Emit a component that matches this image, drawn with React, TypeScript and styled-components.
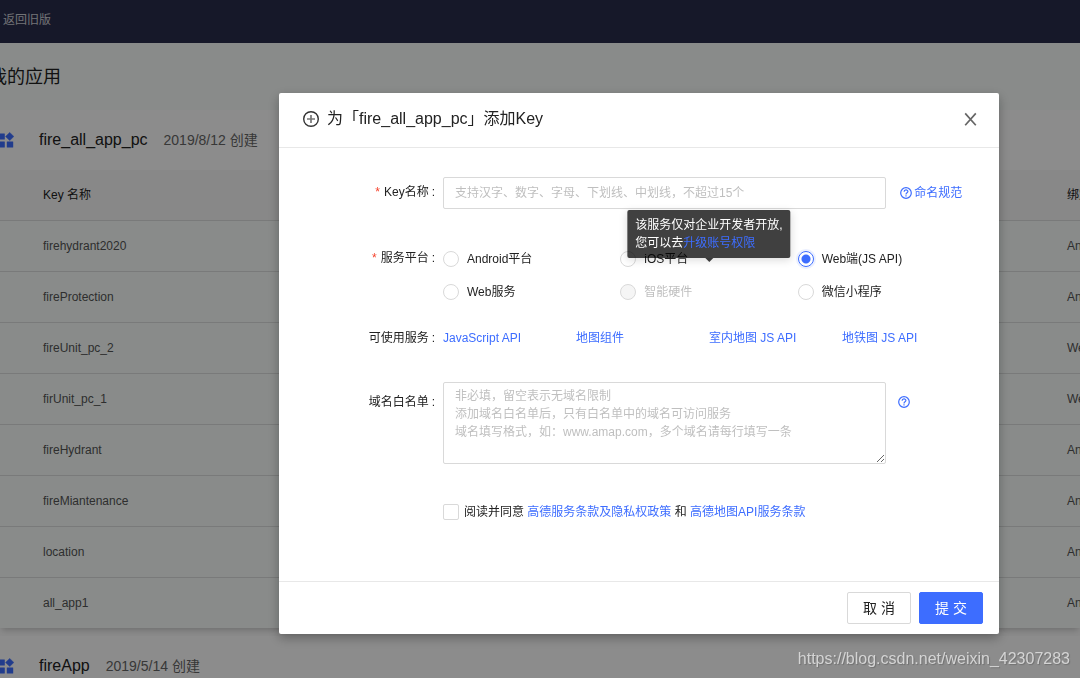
import React from 'react';
import styled, { createGlobalStyle } from 'styled-components';

const GlobalStyle = createGlobalStyle`
  *, *::before, *::after { box-sizing: border-box; }
  body {
    margin: 0;
    overflow: hidden;
    background: #fbfbfb;
    color: #222;
    font: 12px/18px "Liberation Sans", "Noto Sans CJK SC", sans-serif;
  }
  button, input, textarea { font: inherit; }
`;

const Page = styled.div`
  height: 100vh;
  overflow: hidden;
`;

const TopBar = styled.header`
  display: flex;
  align-items: center;
  height: 43px;
  padding: 0 3px 4px;
  background: #282c4b;
`;

const BackLink = styled.a`
  color: #d0d1d8;
  text-decoration: none;
`;

const PageHead = styled.div`
  display: flex;
  align-items: center;
  height: 67px;
  margin-left: -11px;
  background: #f9fefc;
`;

const PageTitle = styled.h1`
  margin: 0;
  font-size: 18px;
  line-height: 28px;
  font-weight: 400;
`;

const AppCard = styled.section`
  margin-bottom: 8px;
  background: #fff;
  box-shadow: 0 4px 6px -2px rgba(0, 0, 0, 0.2);
`;

const AppHead = styled.div`
  display: flex;
  align-items: center;
  height: 60px;
  margin-left: -2px;
`;

const AppIcon = styled.svg`
  flex: none;
  width: 16px;
  height: 16px;
  margin-right: 25px;
  fill: #3d6dff;
`;

const AppName = styled.h2`
  margin: 0 16px 0 0;
  font-size: 16px;
  line-height: 24px;
  font-weight: 400;
`;

const AppDate = styled.span`
  font-size: 14px;
  line-height: 22px;
  color: #666;
`;

const KeyTable = styled.table`
  width: 100%;
  table-layout: fixed;
  border-collapse: separate;
  border-spacing: 0;
  text-align: left;
  white-space: nowrap;

  th {
    height: 51px;
    padding: 0;
    font-weight: 400;
    background: #f7f7f7;
    border-bottom: 1px solid #dcdfde;
  }
  td {
    height: 51px;
    padding: 0;
    color: #555;
    background: #f9fefc;
    border-bottom: 1px solid #dcdfde;
  }
  tr:last-child td {
    height: 50px;
    border-bottom: 0;
  }
  thead tr:last-child th { height: 51px; }
  th:first-child, td:first-child { padding-left: 43px; }
  th:last-child, td:last-child { width: 13px; }
`;

const Overlay = styled.div`
  position: fixed;
  inset: 0;
  display: flex;
  justify-content: flex-end;
  align-items: flex-start;
  padding: 93px 81px 0 0;
  background: rgba(0, 0, 0, 0.45);
`;

const Dialog = styled.div`
  width: 720px;
  background: #fff;
  border-radius: 2px;
  box-shadow: 0 4px 12px rgba(0, 0, 0, 0.3);
`;

const DialogHead = styled.div`
  display: flex;
  align-items: center;
  height: 55px;
  padding: 0 20px 2px 24px;
  border-bottom: 1px solid #e8e8e8;
`;

const DialogTitle = styled.h3`
  flex: 1;
  margin: 0 0 0 8px;
  font-size: 16px;
  line-height: 24px;
  font-weight: 400;
`;

const CloseButton = styled.button`
  display: flex;
  padding: 2px;
  border: 0;
  background: none;
  color: #666;
`;

const Form = styled.form`
  margin: 0;
`;

const Fields = styled.div`
  padding: 29px 24px 53px 0;
`;

const Row = styled.div<{ $gap: number }>`
  display: grid;
  grid-template-columns: 164px 1fr;
  margin-bottom: ${(p) => p.$gap}px;
`;

const RowLabel = styled.label<{ $height: number; $required?: boolean }>`
  padding-right: 8px;
  line-height: ${(p) => p.$height}px;
  text-align: right;

  &::before {
    content: "${(p) => (p.$required ? '*' : '')}";
    margin-right: 4px;
    color: #f5432d;
  }
  &::after {
    content: ":";
    margin-left: 3px;
  }
`;

const FieldWithHelp = styled.div`
  display: grid;
  grid-template-columns: 5fr 1fr;
`;

const TextInput = styled.input`
  width: 100%;
  height: 32px;
  padding: 0 11px;
  border: 1px solid #d9d9d9;
  border-radius: 2px;
  outline: 0;
  &::placeholder { color: #bfbfbf; }
`;

const TextArea = styled.textarea`
  display: block;
  width: 100%;
  height: 82px;
  padding: 4px 11px;
  border: 1px solid #d9d9d9;
  border-radius: 2px;
  outline: 0;
  resize: vertical;
  &::placeholder { color: #bfbfbf; }
`;

const Link = styled.a`
  color: #3d6dff;
  text-decoration: none;
`;

const HelpLink = styled(Link)`
  display: flex;
  align-items: center;
  gap: 2px;
  height: 32px;
  margin-left: 14px;
  white-space: nowrap;
`;

const AreaHelp = styled(HelpLink)`
  height: 40px;
  margin-left: 12px;
`;

const RadioGrid = styled.div`
  display: grid;
  grid-template-columns: repeat(3, 1fr);
  row-gap: 1px;
`;

const OptionCell = styled.div`
  position: relative;
  display: flex;
  align-items: center;
  height: 32px;
`;

const OptionLabel = styled.label<{ $disabled?: boolean }>`
  display: flex;
  align-items: center;
  gap: 8px;
  color: ${(p) => (p.$disabled ? '#bfbfbf' : 'inherit')};
`;

const Radio = styled.input`
  appearance: none;
  width: 16px;
  height: 16px;
  margin: 0;
  border: 1px solid #d9d9d9;
  border-radius: 50%;
  background: #fff;

  &:checked {
    border-color: #3d6dff;
    background: radial-gradient(circle, #3d6dff 0 4px, #fff 5px);
    box-shadow: 0 0 0 2px rgba(61, 109, 255, 0.1);
  }
  &:disabled { background: #f5f5f5; }
`;

const Tooltip = styled.div`
  position: absolute;
  z-index: 1;
  left: 50%;
  bottom: calc(100% + 18px);
  transform: translateX(-50%);
  padding: 6px 8px;
  border-radius: 2px;
  background: rgba(0, 0, 0, 0.75);
  box-shadow: 0 2px 8px rgba(0, 0, 0, 0.15);
  color: #fff;
  white-space: nowrap;

  &::after {
    content: "";
    position: absolute;
    top: 100%;
    left: 50%;
    margin-left: -4px;
    border: 4px solid transparent;
    border-top-color: rgba(0, 0, 0, 0.75);
    border-bottom: 0;
  }
`;

const ServiceLinks = styled.div`
  display: grid;
  grid-template-columns: repeat(4, 1fr);
  line-height: 34px;
  white-space: nowrap;
`;

const Agreement = styled.div`
  display: flex;
  align-items: center;
  height: 32px;
  margin-left: 164px;
`;

const Checkbox = styled.input`
  appearance: none;
  width: 16px;
  height: 16px;
  margin: 0 5px 0 0;
  border: 1px solid #d9d9d9;
  border-radius: 2px;
  background: #fff;
  &:checked { background: #3d6dff; }
`;

const DialogFoot = styled.div`
  display: flex;
  justify-content: flex-end;
  gap: 8px;
  padding: 10px 16px;
  border-top: 1px solid #e8e8e8;
`;

const Button = styled.button<{ $primary?: boolean }>`
  width: 64px;
  height: 32px;
  padding: 0;
  border: 1px solid ${(p) => (p.$primary ? '#3d6dff' : '#d9d9d9')};
  border-radius: 2px;
  background: ${(p) => (p.$primary ? '#3d6dff' : '#fff')};
  color: ${(p) => (p.$primary ? '#fff' : '#222')};
  font-size: 14px;
  line-height: 22px;
`;

const Watermark = styled.div`
  position: fixed;
  right: 10px;
  bottom: 7px;
  color: #d4d4d4;
  font-size: 16px;
  line-height: 24px;
  text-shadow: 1px 1px 1px rgba(0, 0, 0, 0.2);
`;

const BlocksIcon = () => (
  <AppIcon viewBox="0 0 16 16" aria-hidden="true">
    <rect x="0" y="1.4" width="6.8" height="6.2" rx="0.4" />
    <rect x="0" y="9.4" width="6.8" height="6.2" rx="0.4" />
    <rect x="8.8" y="9.4" width="6.4" height="6.2" rx="0.4" />
    <path d="M11.7 0.4 L15.8 4.5 L11.7 8.6 L7.6 4.5Z" stroke="#3d6dff" strokeWidth="0.5" strokeLinejoin="round" />
  </AppIcon>
);

const QuestionIcon = () => (
  <svg width="12" height="12" viewBox="0 0 12 12" fill="none" stroke="currentColor" strokeWidth="1.2" aria-hidden="true">
    <circle cx="6" cy="6" r="5.3" />
    <path d="M4.1 4.8 C4.1 2.3 7.9 2.4 7.9 4.6 C7.9 5.8 6 5.8 6 7.4 M6 8.2 V9.4" />
  </svg>
);

const PlusCircleIcon = () => (
  <svg width="16" height="16" viewBox="0 0 16 16" fill="none" aria-hidden="true">
    <circle cx="8" cy="8" r="7.3" stroke="#333" strokeWidth="1.4" />
    <path d="M8 4 V12 M4 8 H12" stroke="#777" strokeWidth="1.7" />
  </svg>
);

const CloseIcon = () => (
  <svg width="13" height="14" viewBox="0 0 13 14" fill="none" stroke="currentColor" strokeWidth="1.7" aria-hidden="true">
    <path d="M1.2 1.4 L11.8 13.2 M11.8 1.4 L1.2 13.2" />
  </svg>
);

const keys: [string, string][] = [
  ['firehydrant2020', 'Android平台'],
  ['fireProtection', 'Android平台'],
  ['fireUnit_pc_2', 'Web端'],
  ['firUnit_pc_1', 'Web端'],
  ['fireHydrant', 'Android平台'],
  ['fireMiantenance', 'Android平台'],
  ['location', 'Android平台'],
  ['all_app1', 'Android平台'],
];

const platforms = [
  { id: 'android', name: 'Android平台' },
  { id: 'ios', name: 'iOS平台' },
  { id: 'web-js', name: 'Web端(JS API)' },
  { id: 'web-service', name: 'Web服务' },
  { id: 'hardware', name: '智能硬件', disabled: true },
  { id: 'wechat', name: '微信小程序' },
];

const services = ['JavaScript API', '地图组件', '室内地图 JS API', '地铁图 JS API'];

const domainHint = [
  '非必填，留空表示无域名限制',
  '添加域名白名单后，只有白名单中的域名可访问服务',
  '域名填写格式，如：www.amap.com，多个域名请每行填写一条',
].join('\n');

const AppHeading = ({ name, date }: { name: string; date: string }) => (
  <AppHead>
    <BlocksIcon />
    <AppName>{name}</AppName>
    <AppDate>{date} 创建</AppDate>
  </AppHead>
);

export default function App() {
  return (
    <>
      <GlobalStyle />
      <Page>
        <TopBar>
          <BackLink href="#">返回旧版</BackLink>
        </TopBar>
        <main>
          <PageHead>
            <PageTitle>我的应用</PageTitle>
          </PageHead>
          <AppCard>
            <AppHeading name="fire_all_app_pc" date="2019/8/12" />
            <KeyTable>
              <thead>
                <tr>
                  <th>Key 名称</th>
                  <th>绑定服务</th>
                </tr>
              </thead>
              <tbody>
                {keys.map(([name, service]) => (
                  <tr key={name}>
                    <td>{name}</td>
                    <td>{service}</td>
                  </tr>
                ))}
              </tbody>
            </KeyTable>
          </AppCard>
          <AppCard>
            <AppHeading name="fireApp" date="2019/5/14" />
          </AppCard>
        </main>
      </Page>

      <Overlay>
        <Dialog role="dialog" aria-labelledby="dialog-title">
          <DialogHead>
            <PlusCircleIcon />
            <DialogTitle id="dialog-title">为「fire_all_app_pc」添加Key</DialogTitle>
            <CloseButton type="button" aria-label="关闭">
              <CloseIcon />
            </CloseButton>
          </DialogHead>
          <Form onSubmit={(e) => e.preventDefault()}>
            <Fields>
              <Row $gap={34}>
                <RowLabel htmlFor="key-name" $height={30} $required>Key名称</RowLabel>
                <FieldWithHelp>
                  <TextInput
                    id="key-name"
                    type="text"
                    placeholder="支持汉字、数字、字母、下划线、中划线，不超过15个"
                  />
                  <HelpLink href="#">
                    <QuestionIcon />
                    命名规范
                  </HelpLink>
                </FieldWithHelp>
              </Row>

              <Row $gap={13}>
                <RowLabel as="span" id="platform-label" $height={30} $required>服务平台</RowLabel>
                <RadioGrid role="radiogroup" aria-labelledby="platform-label">
                  {platforms.map((p) => (
                    <OptionCell key={p.id}>
                      <OptionLabel htmlFor={p.id} $disabled={p.disabled}>
                        <Radio
                          id={p.id}
                          type="radio"
                          name="platform"
                          disabled={p.disabled}
                          defaultChecked={p.id === 'web-js'}
                        />
                        {p.name}
                      </OptionLabel>
                      {p.disabled && (
                        <Tooltip role="tooltip">
                          该服务仅对企业开发者开放,
                          <br />
                          您可以去<Link href="#">升级账号权限</Link>
                        </Tooltip>
                      )}
                    </OptionCell>
                  ))}
                </RadioGrid>
              </Row>

              <Row $gap={27}>
                <RowLabel as="span" $height={34}>可使用服务</RowLabel>
                <ServiceLinks>
                  {services.map((s) => (
                    <Link href="#" key={s}>{s}</Link>
                  ))}
                </ServiceLinks>
              </Row>

              <Row $gap={32}>
                <RowLabel htmlFor="domains" $height={40}>域名白名单</RowLabel>
                <FieldWithHelp>
                  <TextArea id="domains" placeholder={domainHint} />
                  <AreaHelp href="#" aria-label="帮助">
                    <QuestionIcon />
                  </AreaHelp>
                </FieldWithHelp>
              </Row>

              <Agreement>
                <Checkbox id="agree" type="checkbox" />
                <span>
                  <label htmlFor="agree">阅读并同意</label>{' '}
                  <Link href="#">高德服务条款及隐私权政策</Link> 和{' '}
                  <Link href="#">高德地图API服务条款</Link>
                </span>
              </Agreement>
            </Fields>
            <DialogFoot>
              <Button type="button">取 消</Button>
              <Button type="submit" $primary>提 交</Button>
            </DialogFoot>
          </Form>
        </Dialog>
      </Overlay>
      <Watermark>https://blog.csdn.net/weixin_42307283</Watermark>
    </>
  );
}
